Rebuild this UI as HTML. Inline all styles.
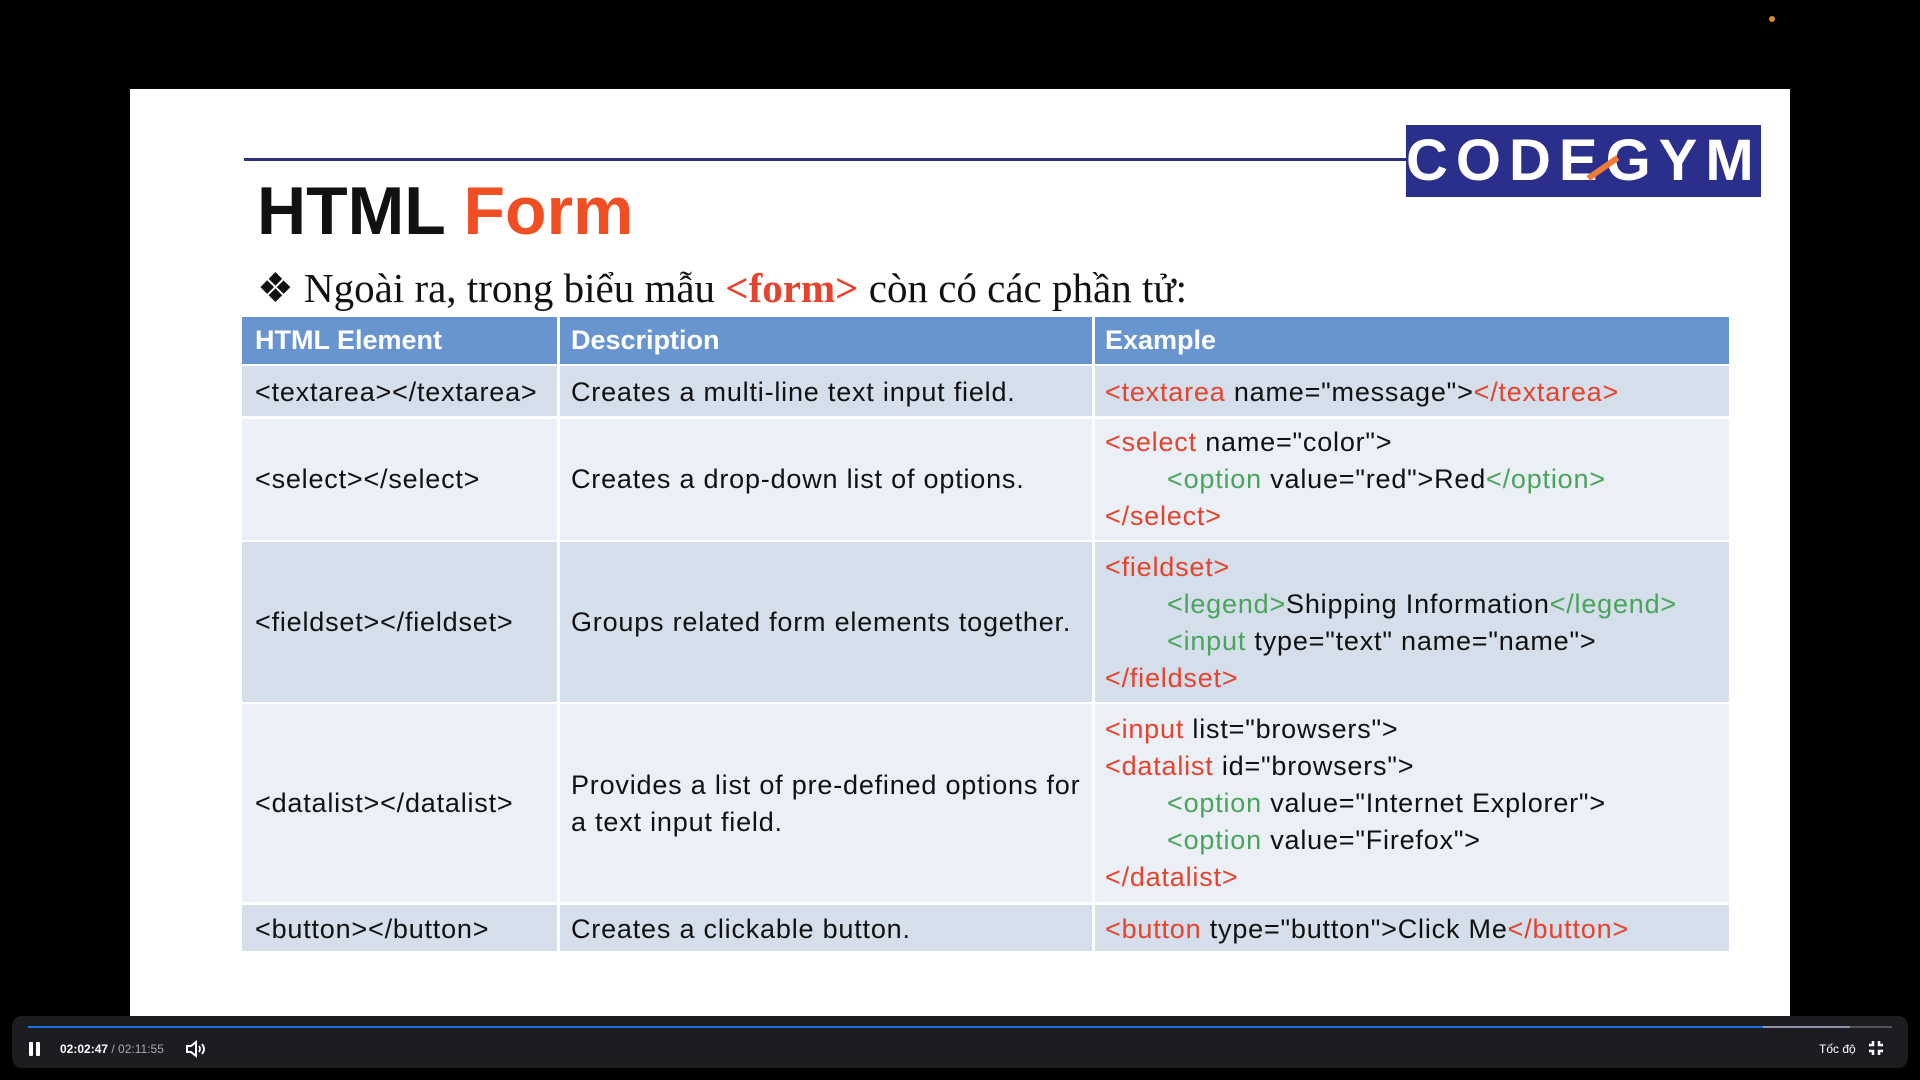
<!DOCTYPE html>
<html><head><meta charset="utf-8"><style>
*{margin:0;padding:0;box-sizing:border-box}
body{width:1920px;height:1080px;background:#000;position:relative;overflow:hidden;font-family:"Liberation Sans",sans-serif}
.slide{position:absolute;left:130px;top:89px;width:1660px;height:940px;background:#fff}
.a{position:absolute;white-space:pre;line-height:37px;font-size:27px;letter-spacing:0.8px;color:#111}
.r{color:#e5432d}.g{color:#4aa55c}
.i{display:inline-block;width:62px}
.cell{position:absolute}
</style></head><body>
<div class="slide"></div>
<div style="position:absolute;left:244px;top:158px;width:1165px;height:3px;background:#2a2f7e"></div>
<div style="position:absolute;left:1406px;top:125px;width:355px;height:72px;background:#2b2f8c;color:#fff;font:bold 58px/72px 'Liberation Sans',sans-serif;letter-spacing:8px;text-align:center">CODEGYM</div>
<div style="position:absolute;left:1585px;top:165px;width:36px;height:6px;background:#f07a3a;transform:rotate(-35deg)"></div>
<div style="position:absolute;left:257px;top:171px;font:bold 68px/80px 'Liberation Sans',sans-serif;color:#111">HTML <span style="color:#f04e23">Form</span></div>
<div style="position:absolute;left:257px;top:263px;font:41px/50px 'Liberation Serif',serif;color:#111;white-space:pre">❖ Ngoài ra, trong biểu mẫu <b style="color:#e5432d">&lt;form&gt;</b> còn có các phần tử:</div>
<div class="cell" style="left:242px;top:317px;width:1487px;height:47px;background:#6894cf"></div>
<div class="cell" style="left:242px;top:366px;width:1487px;height:50px;background:#d5deeb"></div>
<div class="cell" style="left:242px;top:419px;width:1487px;height:121px;background:#ebeff6"></div>
<div class="cell" style="left:242px;top:542px;width:1487px;height:160px;background:#d5deeb"></div>
<div class="cell" style="left:242px;top:704px;width:1487px;height:198px;background:#ebeff6"></div>
<div class="cell" style="left:242px;top:905px;width:1487px;height:46px;background:#d5deeb"></div>
<div class="cell" style="left:557px;top:317px;width:3px;height:634px;background:#fff"></div>
<div class="cell" style="left:1092px;top:317px;width:3px;height:634px;background:#fff"></div>
<div class="a" style="left:255px;top:322px;color:#fff;font-weight:bold;letter-spacing:0">HTML Element</div>
<div class="a" style="left:571px;top:322px;color:#fff;font-weight:bold;letter-spacing:0">Description</div>
<div class="a" style="left:1105px;top:322px;color:#fff;font-weight:bold;letter-spacing:0">Example</div>
<div class="a" style="left:255px;top:374px">&lt;textarea&gt;&lt;/textarea&gt;</div>
<div class="a" style="left:571px;top:374px">Creates a multi-line text input field.</div>
<div class="a" style="left:1105px;top:374px"><span class="r">&lt;textarea</span> name="message"&gt;<span class="r">&lt;/textarea&gt;</span></div>
<div class="a" style="left:255px;top:461px">&lt;select&gt;&lt;/select&gt;</div>
<div class="a" style="left:571px;top:461px">Creates a drop-down list of options.</div>
<div class="a" style="left:1105px;top:424px"><span class="r">&lt;select</span> name="color"&gt;
<span class="i"></span><span class="g">&lt;option</span> value="red"&gt;Red<span class="g">&lt;/option&gt;</span>
<span class="r">&lt;/select&gt;</span></div>
<div class="a" style="left:255px;top:604px">&lt;fieldset&gt;&lt;/fieldset&gt;</div>
<div class="a" style="left:571px;top:604px">Groups related form elements together.</div>
<div class="a" style="left:1105px;top:549px"><span class="r">&lt;fieldset&gt;</span>
<span class="i"></span><span class="g">&lt;legend&gt;</span>Shipping Information<span class="g">&lt;/legend&gt;</span>
<span class="i"></span><span class="g">&lt;input</span> type="text" name="name"&gt;
<span class="r">&lt;/fieldset&gt;</span></div>
<div class="a" style="left:255px;top:785px">&lt;datalist&gt;&lt;/datalist&gt;</div>
<div class="a" style="left:571px;top:767px">Provides a list of pre-defined options for
a text input field.</div>
<div class="a" style="left:1105px;top:711px"><span class="r">&lt;input</span> list="browsers"&gt;
<span class="r">&lt;datalist</span> id="browsers"&gt;
<span class="i"></span><span class="g">&lt;option</span> value="Internet Explorer"&gt;
<span class="i"></span><span class="g">&lt;option</span> value="Firefox"&gt;
<span class="r">&lt;/datalist&gt;</span></div>
<div class="a" style="left:255px;top:911px">&lt;button&gt;&lt;/button&gt;</div>
<div class="a" style="left:571px;top:911px">Creates a clickable button.</div>
<div class="a" style="left:1105px;top:911px"><span class="r">&lt;button</span> type="button"&gt;Click Me<span class="r">&lt;/button&gt;</span></div>
<div style="position:absolute;left:12px;top:1016px;width:1896px;height:52px;background:#1c1d21;border-radius:10px"></div>
<div style="position:absolute;left:28px;top:1026px;width:1864px;height:2px;background:#555"></div>
<div style="position:absolute;left:28px;top:1026px;width:1822px;height:2px;background:#8a96a8"></div>
<div style="position:absolute;left:28px;top:1026px;width:1735px;height:2px;background:#1e6fe0"></div>
<div style="position:absolute;left:29px;top:1042px;width:4px;height:14px;background:#fff;border-radius:1px"></div>
<div style="position:absolute;left:36px;top:1042px;width:4px;height:14px;background:#fff;border-radius:1px"></div>
<div style="position:absolute;left:60px;top:1040px;font:bold 12px/18px 'Liberation Sans',sans-serif;color:#fff">02:02:47 <span style="font-weight:normal;color:#aaa">/ 02:11:55</span></div>
<svg style="position:absolute;left:185px;top:1040px" width="22" height="18" viewBox="0 0 22 18"><path d="M2 6h4l5-4v14l-5-4H2z" fill="none" stroke="#fff" stroke-width="2"/><path d="M14 6q2 3 0 6M17 4q4 5 0 10" fill="none" stroke="#fff" stroke-width="1.8"/></svg>
<div style="position:absolute;left:1819px;top:1040px;font:12px/18px 'Liberation Sans',sans-serif;color:#fff">Tốc độ</div>
<svg style="position:absolute;left:1868px;top:1040px" width="16" height="16" viewBox="0 0 16 16" fill="none" stroke="#fff" stroke-width="2.5"><path d="M5 1v4H1M11 1v4h4M5 15v-4H1M11 15v-4h4"/></svg>
<div style="position:absolute;left:1769px;top:16px;width:6px;height:6px;border-radius:50%;background:#d98a2a"></div>
</body></html>
